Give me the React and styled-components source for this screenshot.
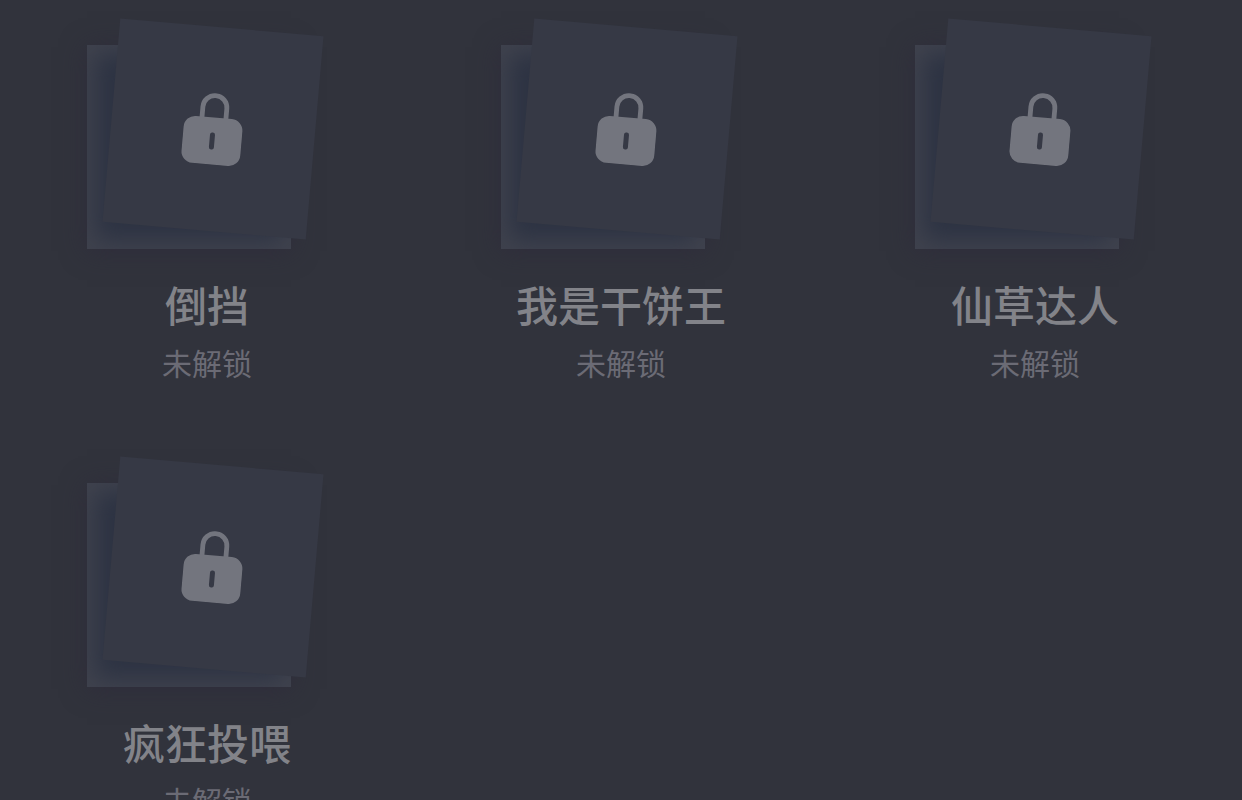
import React from 'react';
import styled, { createGlobalStyle } from 'styled-components';

const GlobalStyle = createGlobalStyle`
  body {
    margin: 0;
    background-color: #31333c;
    font-family: 'Noto Sans CJK SC', sans-serif;
  }
`;

const BadgeGrid = styled.ul`
  display: grid;
  grid-template-columns: repeat(3, 1fr);
  row-gap: 101px;
  margin: 0;
  padding: 45px 0;
  list-style: none;
`;

const BadgeItem = styled.li`
  display: flex;
  flex-direction: column;
  align-items: center;
`;

const BadgeStack = styled.div`
  position: relative;
  width: 240px;
  height: 204px;
`;

const BackCard = styled.div`
  width: 204px;
  height: 204px;
  background-color: #2d3343;
  box-shadow:
    inset 0 0 24px 8px #40434e,
    0 2px 24px rgba(46, 42, 58, 0.7);
`;

const FrontCard = styled.div`
  position: absolute;
  top: -18px;
  left: 24px;
  display: flex;
  align-items: center;
  justify-content: center;
  width: 204px;
  height: 204px;
  background-color: #363945;
  transform: rotate(5deg);
`;

const Name = styled.h3`
  margin: 25px 0 0;
  color: #828389;
  font-size: 42px;
  font-weight: 500;
  line-height: 60px;
`;

const Status = styled.p`
  margin: 8px 0 0;
  color: #6b6b75;
  font-size: 30px;
  font-weight: 400;
  line-height: 40px;
`;

const LockIcon = () => (
  <svg width="60" height="72" viewBox="0 0 60 72" aria-hidden="true">
    <path
      d="M18 27V14.5a12 12 0 0 1 24 0V27"
      fill="none"
      stroke="#73757e"
      strokeWidth="4.8"
    />
    <rect x="0.5" y="24.5" width="59" height="47" rx="11.5" fill="#73757e" />
    <rect x="27.5" y="39.5" width="5" height="17" rx="2.2" fill="#363945" />
  </svg>
);

const badges = ['倒挡', '我是干饼王', '仙草达人', '疯狂投喂'];

const Badge = ({ name }) => (
  <BadgeItem>
    <BadgeStack>
      <BackCard />
      <FrontCard>
        <LockIcon />
      </FrontCard>
    </BadgeStack>
    <Name>{name}</Name>
    <Status>未解锁</Status>
  </BadgeItem>
);

const App = () => (
  <>
    <GlobalStyle />
    <BadgeGrid>
      {badges.map(name => (
        <Badge key={name} name={name} />
      ))}
    </BadgeGrid>
  </>
);

export default App;
